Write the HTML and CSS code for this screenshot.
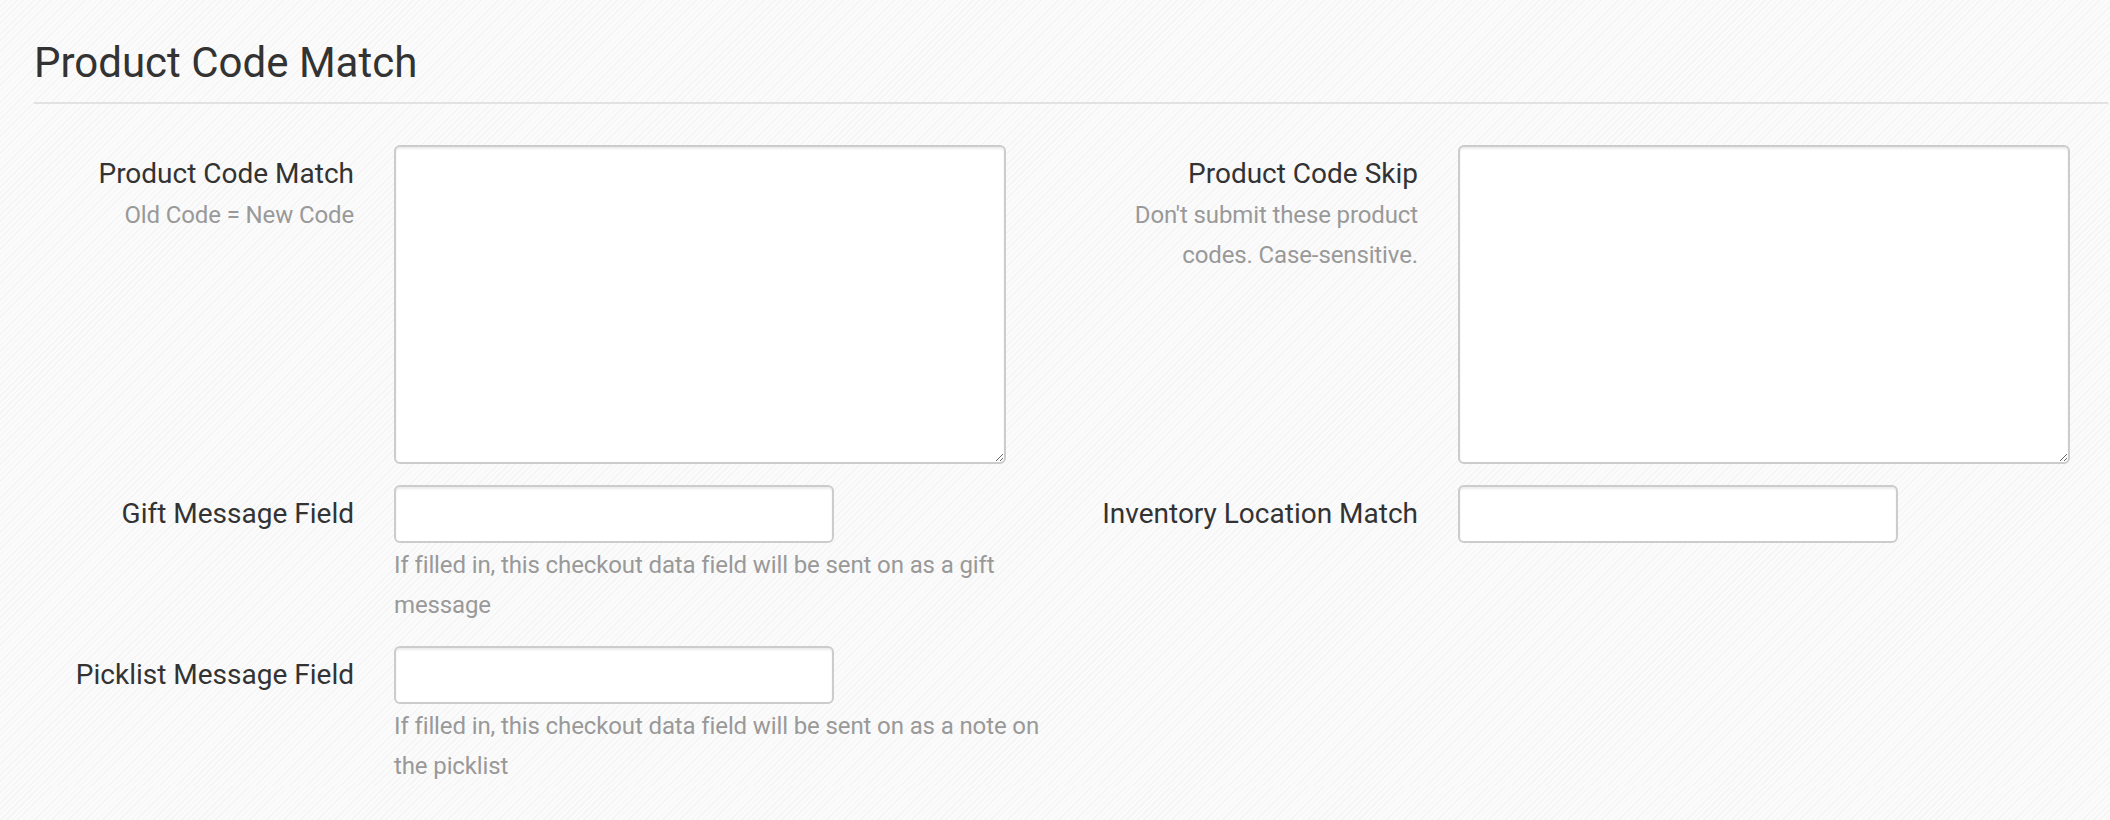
FILE: index.html
```html
<!DOCTYPE html>
<html lang="en">
<head>
<meta charset="UTF-8">
<meta name="viewport" content="width=device-width, initial-scale=1.0">
<title>Product Code Match</title>
<link rel="stylesheet" href="styles.css">
</head>
<body>

<div class="page">
  <h3 class="section-title">Product Code Match</h3>

  <form class="form-grid">
    <div class="form-group">
      <div class="label-cell">
        <label for="code_match">Product Code Match</label>
        <p class="help">Old Code = New Code</p>
      </div>
      <div class="control-cell">
        <textarea id="code_match" name="code_match"></textarea>
      </div>
    </div>

    <div class="form-group">
      <div class="label-cell">
        <label for="code_skip">Product Code Skip</label>
        <p class="help">Don't submit these product codes. Case-sensitive.</p>
      </div>
      <div class="control-cell">
        <textarea id="code_skip" name="code_skip"></textarea>
      </div>
    </div>

    <div class="form-group">
      <div class="label-cell">
        <label for="gift_field">Gift Message Field</label>
      </div>
      <div class="control-cell">
        <input type="text" id="gift_field" name="gift_field">
        <p class="help">If filled in, this checkout data field will be sent on as a gift message</p>
      </div>
    </div>

    <div class="form-group">
      <div class="label-cell">
        <label for="inventory_match">Inventory Location Match</label>
      </div>
      <div class="control-cell">
        <input type="text" id="inventory_match" name="inventory_match">
      </div>
    </div>

    <div class="form-group">
      <div class="label-cell">
        <label for="picklist_field">Picklist Message Field</label>
      </div>
      <div class="control-cell">
        <input type="text" id="picklist_field" name="picklist_field">
        <p class="help">If filled in, this checkout data field will be sent on as a note on the picklist</p>
      </div>
    </div>
  </form>
</div>

</body>
</html>
```

FILE: styles.css
```css
body {
  margin: 0;
  font-family: Roboto, "Liberation Sans", Arial, sans-serif;
  color: #333;
  background-color: #fafafa;
  background-image: repeating-linear-gradient(135deg, #f4f4f4 0 1px, #fbfbfb 1px 4px);
}

.page {
  padding: 40px 2px 0 34px;
}

.section-title {
  margin: 0 0 41px;
  padding-bottom: 16px;
  font-size: 42px;
  font-weight: 400;
  line-height: 46px;
  border-bottom: 2px solid #e2e2e2;
}

.form-grid {
  display: grid;
  grid-template-columns: 1064px 1064px;
  row-gap: 21px;
}

.form-group {
  display: flex;
  align-items: flex-start;
}

.label-cell {
  width: 320px;
  padding-top: 9px;
  margin-right: 40px;
  text-align: right;
}

label {
  display: block;
  font-size: 28px;
  line-height: 40px;
  color: #333;
}

.control-cell {
  width: 665px;
}

.help {
  margin: 2px 0 0;
  font-size: 24px;
  line-height: 40px;
  letter-spacing: -0.12px;
  color: #999;
}

.label-cell .help {
  margin-top: 1px;
}

textarea,
input[type="text"] {
  display: block;
  box-sizing: border-box;
  margin: 0;
  padding: 12px 16px;
  border: 2px solid #ccc;
  border-radius: 6px;
  background-color: #fff;
  box-shadow: inset 0 2px 2px rgba(0, 0, 0, 0.075);
  font-family: inherit;
  font-size: 28px;
  color: #555;
}

textarea {
  width: 612px;
  height: 319px;
}

input[type="text"] {
  width: 440px;
  height: 58px;
}
```
